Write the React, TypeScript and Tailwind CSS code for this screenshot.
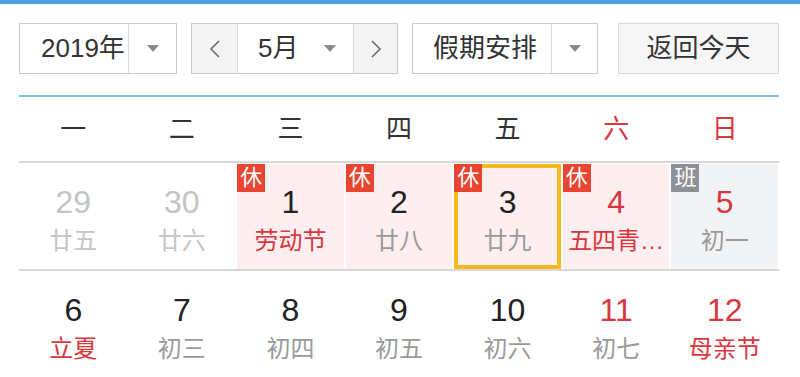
import React from "react";

const FONT = { fontFamily: '"Liberation Sans", Arial, "Noto Sans CJK SC", sans-serif' };

function Tri() {
  return (
    <svg width="12" height="7" viewBox="0 0 12 7">
      <path d="M0 0 L12 0 L6 7 Z" fill="#8a8a8a" />
    </svg>
  );
}

function Chevron({ dir }: { dir: "l" | "r" }) {
  return (
    <svg width="12" height="20" viewBox="0 0 12 20">
      <path
        d={dir === "l" ? "M10 2 L2 10 L10 18" : "M2 2 L10 10 L2 18"}
        fill="none"
        stroke="#6a6a6a"
        strokeWidth="1.6"
      />
    </svg>
  );
}

type Cell = {
  n: string;
  l: string;
  nc: string;
  lc: string;
  bg?: string;
  badge?: "休" | "班";
  today?: boolean;
};

const RED = "text-[#d9363e]";
const BLACK = "text-[#222222]";
const GRAY = "text-[#9a9a9a]";
const LIGHT = "text-[#c4c4c4]";

const row1: Cell[] = [
  { n: "29", l: "廿五", nc: LIGHT, lc: LIGHT },
  { n: "30", l: "廿六", nc: LIGHT, lc: LIGHT },
  { n: "1", l: "劳动节", nc: BLACK, lc: RED, bg: "bg-[#fdeff0]", badge: "休" },
  { n: "2", l: "廿八", nc: BLACK, lc: GRAY, bg: "bg-[#fdeff0]", badge: "休" },
  { n: "3", l: "廿九", nc: BLACK, lc: GRAY, bg: "bg-[#fdeff0]", badge: "休", today: true },
  { n: "4", l: "五四青…", nc: RED, lc: RED, bg: "bg-[#fdeff0]", badge: "休" },
  { n: "5", l: "初一", nc: RED, lc: GRAY, bg: "bg-[#f2f3f5]", badge: "班" },
];

const row2: Cell[] = [
  { n: "6", l: "立夏", nc: BLACK, lc: RED },
  { n: "7", l: "初三", nc: BLACK, lc: GRAY },
  { n: "8", l: "初四", nc: BLACK, lc: GRAY },
  { n: "9", l: "初五", nc: BLACK, lc: GRAY },
  { n: "10", l: "初六", nc: BLACK, lc: GRAY },
  { n: "11", l: "初七", nc: RED, lc: GRAY },
  { n: "12", l: "母亲节", nc: RED, lc: RED },
];

function DayCell({ c }: { c: Cell }) {
  return (
    <div className="px-px pt-px">
      <div
        className={`relative flex h-full flex-col items-center ${c.bg ?? ""} ${
          c.today ? "border-[4px] border-[#f4b820]" : ""
        }`}
      >
        {c.badge && (
          <div
            className={`absolute ${c.today ? "-left-[4px] -top-[4px]" : "left-0 top-0"} flex h-[28px] w-[28px] items-center justify-center text-[22px] leading-none text-white ${
              c.badge === "休" ? "bg-[#e8442f]" : "bg-[#8d9096]"
            }`}
          >
            {c.badge}
          </div>
        )}
        <div className={`${c.today ? "mt-[18px]" : "mt-[22px]"} text-[32px] leading-[32px] ${c.nc}`}>{c.n}</div>
        <div className={`mt-[11px] whitespace-nowrap text-[24px] leading-[24px] ${c.lc}`}>{c.l}</div>
      </div>
    </div>
  );
}

export default function App() {
  const week = [
    { t: "一", c: "text-[#333]" },
    { t: "二", c: "text-[#333]" },
    { t: "三", c: "text-[#333]" },
    { t: "四", c: "text-[#333]" },
    { t: "五", c: "text-[#333]" },
    { t: "六", c: RED },
    { t: "日", c: RED },
  ];
  return (
    <div className="h-[377px] w-[800px] overflow-hidden bg-white" style={FONT}>
      <div className="h-[4px] w-full bg-[#4d9fe4]" />
      <div className="ml-[19px] w-[760px]">
        <div className="mt-[19px] flex h-[51px] items-stretch text-[26px] text-[#333]">
          <div className="flex w-[158px] border border-[#c9c9c9] bg-white">
            <div className="flex flex-1 items-center pl-[21px]">2019年</div>
            <div className="flex w-[48px] items-center justify-center border-l border-[#dcdcdc]">
              <Tri />
            </div>
          </div>
          <div className="ml-[14px] flex w-[207px] border border-[#c9c9c9]">
            <div className="flex w-[45px] items-center justify-center bg-[#f4f4f4]">
              <Chevron dir="l" />
            </div>
            <div className="flex flex-1 items-center justify-between border-x border-[#dcdcdc] bg-white pl-[20px] pr-[17px]">
              <span>5月</span>
              <Tri />
            </div>
            <div className="flex w-[43px] items-center justify-center bg-[#f4f4f4]">
              <Chevron dir="r" />
            </div>
          </div>
          <div className="ml-[14px] flex w-[186px] border border-[#c9c9c9] bg-white">
            <div className="flex flex-1 items-center pl-[20px]">假期安排</div>
            <div className="flex w-[46px] items-center justify-center border-l border-[#dcdcdc]">
              <Tri />
            </div>
          </div>
          <div className="ml-[20px] flex w-[161px] items-center justify-center border border-[#d9d9d9] bg-[#f6f6f6]">
            返回今天
          </div>
        </div>
        <div className="mt-[21px] h-[2px] w-full bg-[#86bde6]" />
        <div className="grid h-[66px] grid-cols-7 items-center border-b-2 border-[#d8d8d8] text-[26px] leading-none">
          {week.map((w) => (
            <div key={w.t} className={`text-center ${w.c}`}>
              {w.t}
            </div>
          ))}
        </div>
        <div className="grid h-[108px] grid-cols-7 border-b-2 border-[#d8d8d8]">
          {row1.map((c) => (
            <DayCell key={c.n} c={c} />
          ))}
        </div>
        <div className="grid h-[108px] grid-cols-7">
          {row2.map((c) => (
            <DayCell key={c.n} c={c} />
          ))}
        </div>
      </div>
    </div>
  );
}
